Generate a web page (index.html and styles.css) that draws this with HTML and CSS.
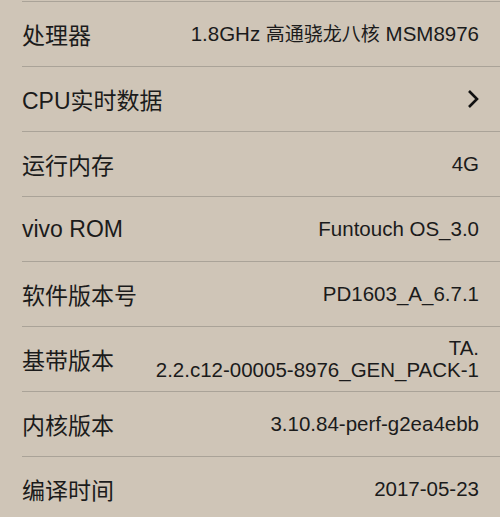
FILE: index.html
```html
<!DOCTYPE html>
<html lang="zh-CN">

<head>
  <meta charset="utf-8" />
  <title>手机信息</title>
  <link rel="stylesheet" href="styles.css">
</head>

<body>
  <ul class="info-list">
    <li class="info-row">
      <span class="label">处理器</span>
      <span class="value">1.8GHz <span class="cjk">高通骁龙八核</span> MSM8976</span>
    </li>
    <li class="info-row">
      <span class="label">CPU实时数据</span>
      <svg class="chevron" width="14" height="20" viewBox="0 0 14 20">
        <path d="M3 2 L11 10 L3 18" fill="none" stroke="#111" stroke-width="2.6" />
      </svg>
    </li>
    <li class="info-row">
      <span class="label">运行内存</span>
      <span class="value">4G</span>
    </li>
    <li class="info-row">
      <span class="label">vivo ROM</span>
      <span class="value">Funtouch OS_3.0</span>
    </li>
    <li class="info-row">
      <span class="label">软件版本号</span>
      <span class="value">PD1603_A_6.7.1</span>
    </li>
    <li class="info-row">
      <span class="label">基带版本</span>
      <span class="value">TA.<br>2.2.c12-00005-8976_GEN_PACK-1</span>
    </li>
    <li class="info-row">
      <span class="label">内核版本</span>
      <span class="value">3.10.84-perf-g2ea4ebb</span>
    </li>
    <li class="info-row">
      <span class="label">编译时间</span>
      <span class="value">2017-05-23</span>
    </li>
  </ul>
</body>

</html>
```

FILE: styles.css
```css
body {
  margin: 0;
  background: #cfc5b7;
  font-family: "Liberation Sans", "Noto Sans CJK SC", sans-serif;
  color: #1b1b1b;
  overflow: hidden;
}

.info-list {
  list-style: none;
  margin: 0;
  padding: 1px 0 0 22px;
}

.info-row {
  display: flex;
  align-items: center;
  justify-content: space-between;
  gap: 16px;
  height: 64px;
  padding-right: 21px;
  border-top: 1px solid #aaa398;
}

.label {
  font-size: 23px;
  white-space: nowrap;
}

.value {
  font-size: 20.5px;
  line-height: 22px;
  text-align: right;
}

.cjk {
  font-size: 19px;
}

.chevron {
  display: block;
  margin-right: -1px;
}
```
